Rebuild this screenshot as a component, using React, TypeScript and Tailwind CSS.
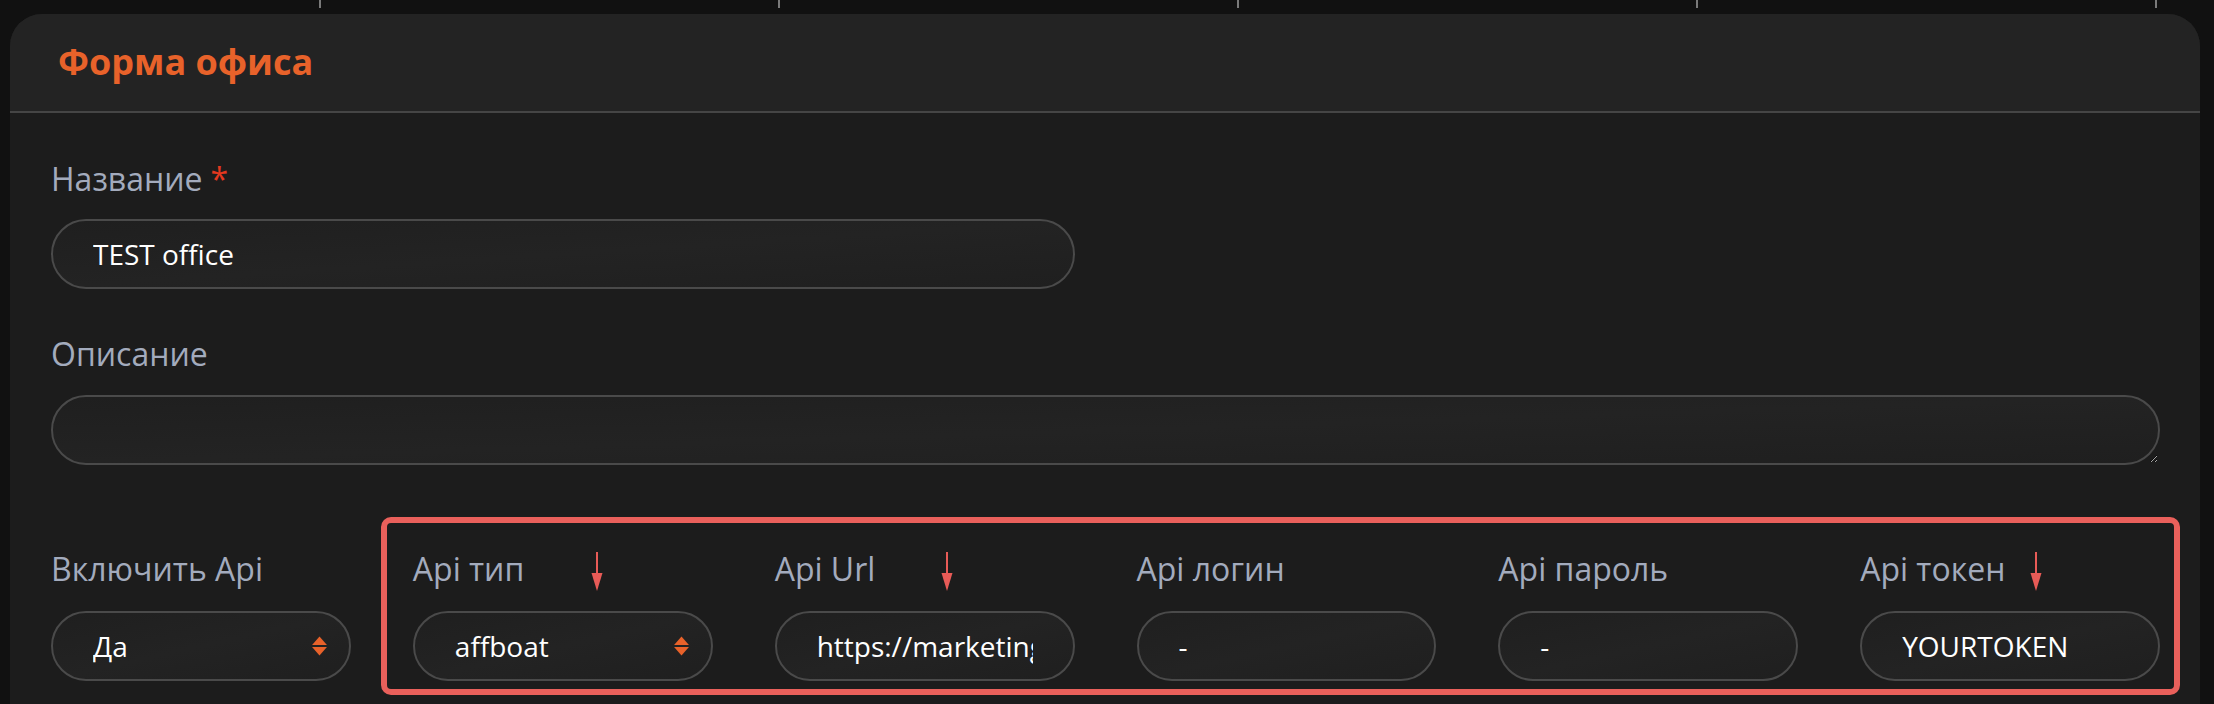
import { useState } from "react";

const ticks = [321, 459, 459, 459, 459];

function Label({ text, required }: { text: string; required?: boolean }) {
  return (
    <label className="block h-[40px] text-[32px] leading-[40px] text-[#a3abbd] whitespace-nowrap">
      {text}
      {required && <span className="ml-2 text-[#e3381f]">*</span>}
    </label>
  );
}

const fieldCls =
  "w-full h-[70px] rounded-full border-2 border-[#4a4a4a] bg-gradient-to-br from-[#1f1f1f] via-[#232323] to-[#1f1f1f] pl-[40px] pr-[40px] text-[28px] text-white outline-none";

function SelectField({ value }: { value: string }) {
  const [v, setV] = useState(value);
  return (
    <div className="relative">
      <select value={v} onChange={(e) => setV(e.target.value)} className={`${fieldCls} appearance-none`}>
        <option value={value}>{value}</option>
      </select>
      <svg className="pointer-events-none absolute right-[23px] top-[24px] h-[22px] w-[17px]" viewBox="0 0 16 20">
        <path d="M8 1 L15 9 L1 9 Z" fill="#e8622a" />
        <path d="M1 11 L15 11 L8 19 Z" fill="#e8622a" />
      </svg>
    </div>
  );
}

function TextField({ value }: { value: string }) {
  return <input readOnly value={value} className={fieldCls} />;
}

function Arrow({ className }: { className: string }) {
  return (
    <svg className={`pointer-events-none absolute h-[40px] w-[14px] ${className}`} viewBox="0 0 14 40">
      <path d="M7 0 L7 24" stroke="#e85b57" strokeWidth={2} />
      <path d="M1.5 21 L12.5 21 L7 39 Z" fill="#e85b57" />
    </svg>
  );
}

export default function App() {
  return (
    <div className="flex h-[704px] w-full flex-col overflow-hidden bg-[#111111] font-['Open_Sans',sans-serif]">
      <div className="flex h-[14px] shrink-0">
        {ticks.map((w, i) => (
          <div key={i} style={{ width: w }} className="h-[8px] shrink-0 border-r-2 border-[#7a7a7a]" />
        ))}
      </div>

      <div className="ml-[10px] mr-[14px] flex flex-1 flex-col overflow-hidden rounded-t-[32px] bg-[#1c1c1c]">
        <div className="flex h-[99px] shrink-0 items-center border-b-2 border-[#454545] bg-[#232323] px-[48px] pb-[2px]">
          <h1 className="text-[36px] font-bold leading-[44px] text-[#e8622a]">Форма офиса</h1>
        </div>

        <div className="relative grid grid-cols-6 gap-x-[62px] pl-[41px] pr-[40px] pt-[46px]">
          <div className="col-span-3">
            <Label text="Название" required />
            <div className="mt-[20px]">
              <TextField value="TEST office" />
            </div>
          </div>
          <div className="col-span-3" />

          <div className="col-span-6 mt-[45px]">
            <Label text="Описание" />
            <textarea
              className="mt-[21px] block h-[70px] w-full rounded-full border-2 border-[#4a4a4a] bg-gradient-to-br from-[#1f1f1f] via-[#232323] to-[#1f1f1f] px-[40px] text-[28px] text-white outline-none"
            />
          </div>

          {[
            { label: "Включить Api", kind: "select", value: "Да" },
            { label: "Api тип", kind: "select", value: "affboat" },
            { label: "Api Url", kind: "text", value: "https://marketing.example.com/api" },
            { label: "Api логин", kind: "text", value: "-" },
            { label: "Api пароль", kind: "text", value: "-" },
            { label: "Api токен", kind: "text", value: "YOURTOKEN" },
          ].map((f) => (
            <div key={f.label} className="mt-[84px]">
              <Label text={f.label} />
              <div className="mt-[22px]">
                {f.kind === "select" ? <SelectField value={f.value} /> : <TextField value={f.value} />}
              </div>
            </div>
          ))}

          {/* annotation overlay */}
          <div className="pointer-events-none absolute left-[371px] top-[404px] h-[178px] w-[1799px] rounded-[10px] border-[6px] border-[#e9605b]" />
          <Arrow className="left-[580px] top-[439px]" />
          <Arrow className="left-[930px] top-[439px]" />
          <Arrow className="left-[2019px] top-[439px]" />
        </div>
      </div>
    </div>
  );
}
